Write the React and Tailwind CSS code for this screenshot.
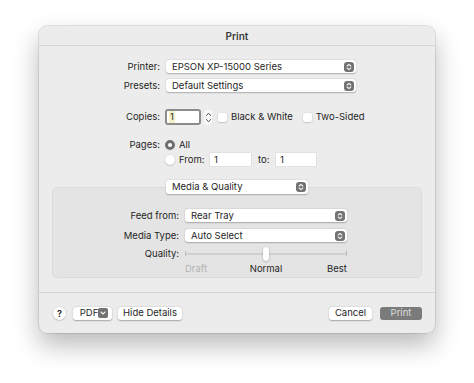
const font = { fontFamily: "Inter, 'Liberation Sans', sans-serif" };

function Stepper() {
  return (
    <span className="flex h-[10px] w-[10px] items-center justify-center rounded-[3px] bg-[#727272]">
      <svg width="6" height="8" viewBox="0 0 6 8" fill="none" stroke="#f2f2f2" strokeWidth="1.1" strokeLinecap="round" strokeLinejoin="round">
        <path d="M1.2 3 L3 1.3 L4.8 3" />
        <path d="M1.2 5 L3 6.7 L4.8 5" />
      </svg>
    </span>
  );
}

function Select({ value, width }) {
  return (
    <div
      className="flex h-[13px] items-center justify-between rounded-[3px] bg-white pl-[6px] pr-[2px] text-[9.5px] text-[#262626] shadow-[0_0.5px_1.5px_rgba(0,0,0,0.28)]"
      style={{ width }}
    >
      <span>{value}</span>
      <Stepper />
    </div>
  );
}

function Checkbox() {
  return <span className="inline-block h-[9px] w-[9px] rounded-[2px] bg-white shadow-[0_0.5px_1.5px_rgba(0,0,0,0.3)]" />;
}

function Field({ value, width }) {
  return (
    <div
      className="flex h-[13px] items-center bg-white pl-[4px] text-[9.5px] text-[#262626] shadow-[0_0_1px_rgba(0,0,0,0.25)]"
      style={{ width }}
    >
      {value}
    </div>
  );
}

function Button({ children, className = "" }) {
  return (
    <div
      className={
        "flex h-[13px] items-center justify-center rounded-[3px] bg-white text-[9.5px] text-[#262626] shadow-[0_0.5px_1.5px_rgba(0,0,0,0.3)] " +
        className
      }
    >
      {children}
    </div>
  );
}

function Label({ children, width = 121 }) {
  return (
    <span className="shrink-0 text-right text-[9.5px] text-[#262626]" style={{ width }}>
      {children}
    </span>
  );
}

export default function App() {
  return (
    <div className="h-[383px] w-[474px] overflow-hidden bg-white pt-[26px] leading-none" style={font}>
      <div className="ml-[39px] w-[396px] rounded-[8px] bg-[#ececec] shadow-[0_12px_26px_rgba(0,0,0,0.28),0_0_0_0.5px_rgba(0,0,0,0.18)]">
        {/* title bar */}
        <div className="flex h-[20px] items-center justify-center border-b border-[#d6d6d6] text-[10px] font-semibold text-[#3a3a3a]">
          Print
        </div>

        <div className="pt-[14px]">
          {/* printer / presets */}
          <div className="flex h-[13px] items-center">
            <Label>Printer:</Label>
            <div className="ml-[6px]">
              <Select value="EPSON XP-15000 Series" width={190} />
            </div>
          </div>
          <div className="mt-[6px] flex h-[13px] items-center">
            <Label>Presets:</Label>
            <div className="ml-[6px]">
              <Select value="Default Settings" width={190} />
            </div>
          </div>

          {/* copies */}
          <div className="mt-[17px] flex h-[16px] items-center">
            <Label>Copies:</Label>
            <div className="ml-[5px] flex h-[16px] w-[36px] items-center rounded-[3px] border-[2px] border-[#8c8c8c] bg-white pl-[2px] text-[9.5px] text-[#262626]">
              <span className="bg-[#f3f1c8] px-[1px] py-[1px]">1</span>
            </div>
            <span className="ml-[3px] flex h-[15px] w-[8px] items-center justify-center rounded-[3px] bg-white/70">
              <svg width="7" height="13" viewBox="0 0 7 13" fill="none" stroke="#555" strokeWidth="1" strokeLinecap="round" strokeLinejoin="round">
                <path d="M1.5 4.5 L3.5 2.2 L5.5 4.5" />
                <path d="M1.5 8.5 L3.5 10.8 L5.5 8.5" />
              </svg>
            </span>
            <span className="ml-[6px] flex items-center">
              <Checkbox />
            </span>
            <span className="ml-[4px] text-[9.5px] text-[#262626]">Black &amp; White</span>
            <span className="ml-[10px] flex items-center">
              <Checkbox />
            </span>
            <span className="ml-[4px] text-[9.5px] text-[#262626]">Two-Sided</span>
          </div>

          {/* pages */}
          <div className="mt-[15px] flex h-[10px] items-center">
            <Label>Pages:</Label>
            <span className="ml-[5px] h-[10px] w-[10px] shrink-0 rounded-full border-[3px] border-[#6f6f6f] bg-white" />
            <span className="ml-[4px] text-[9.5px] text-[#262626]">All</span>
          </div>
          <div className="mt-[3px] flex h-[13px] items-center">
            <span className="ml-[126px] h-[10px] w-[10px] shrink-0 rounded-full bg-white shadow-[0_0.5px_1.5px_rgba(0,0,0,0.3)]" />
            <span className="ml-[4px] w-[31px] text-[9.5px] text-[#262626]">From:</span>
            <Field value="1" width={41} />
            <span className="ml-[7px] w-[18px] text-[9.5px] text-[#262626]">to:</span>
            <Field value="1" width={40} />
          </div>

          {/* media & quality popup */}
          <div className="relative z-10 ml-[127px] mt-[14px] w-[142px]">
            <div className="flex h-[14px] items-center justify-between rounded-[3px] bg-white pl-[6px] pr-[2px] text-[9.5px] text-[#262626] shadow-[0_0.5px_1.5px_rgba(0,0,0,0.28)]">
              <span>Media &amp; Quality</span>
              <Stepper />
            </div>
          </div>

          {/* group box */}
          <div className="mx-[13px] -mt-[7px] h-[91px] rounded-[5px] border border-[#dcdcdc] bg-[#e4e4e4] pt-[21px]">
            <div className="flex h-[13px] items-center">
              <Label width={126}>Feed from:</Label>
              <div className="ml-[6px]">
                <Select value="Rear Tray" width={162} />
              </div>
            </div>
            <div className="mt-[7px] flex h-[13px] items-center">
              <Label width={126}>Media Type:</Label>
              <div className="ml-[6px]">
                <Select value="Auto Select" width={162} />
              </div>
            </div>
            <div className="mt-[4px] flex h-[16px] items-center">
              <Label width={126}>Quality:</Label>
              <div className="relative ml-[6px] flex h-[16px] w-[162px] items-center">
                <div className="h-[2px] w-full rounded-full bg-[#cfcfcf]" />
                <span className="absolute left-0 top-[5px] h-[5px] w-[1px] bg-[#bdbdbd]" />
                <span className="absolute right-0 top-[5px] h-[5px] w-[1px] bg-[#bdbdbd]" />
                <span className="absolute left-[78px] top-[1px] h-[14px] w-[6px] rounded-[3px] bg-white shadow-[0_0.5px_2px_rgba(0,0,0,0.35)]" />
              </div>
            </div>
            <div className="ml-[132px] mt-[1px] flex h-[11px] w-[162px] items-center justify-between text-[9.5px]">
              <span className="w-[40px] text-[#b3b3b3]">Draft</span>
              <span className="text-[#262626]">Normal</span>
              <span className="w-[40px] text-right text-[#262626]">Best</span>
            </div>
          </div>

          {/* footer */}
          <div className="mt-[14px] flex h-[41px] items-center border-t border-[#d6d6d6] px-[13px]">
            <span className="ml-[1px] flex h-[13px] w-[13px] items-center justify-center rounded-full bg-white text-[9px] font-bold text-[#333] shadow-[0_0.5px_1.5px_rgba(0,0,0,0.3)]">
              ?
            </span>
            <Button className="ml-[7px] w-[39px] justify-between pl-[5px] pr-[2px]">
              <span>PDF</span>
              <span className="flex h-[10px] w-[10px] items-center justify-center rounded-[2px] bg-[#727272]">
                <svg width="6" height="4" viewBox="0 0 6 4" fill="none" stroke="#f2f2f2" strokeWidth="1.1" strokeLinecap="round" strokeLinejoin="round">
                  <path d="M1 1 L3 3 L5 1" />
                </svg>
              </span>
            </Button>
            <Button className="ml-[6px] w-[64px]">Hide Details</Button>
            <div className="flex-1" />
            <Button className="w-[43px]">Cancel</Button>
            <div className="ml-[8px] flex h-[13px] w-[42px] items-center justify-center rounded-[3px] bg-[#7b7b7b] text-[9.5px] text-[#dedede]">
              Print
            </div>
          </div>
        </div>
      </div>
    </div>
  );
}
